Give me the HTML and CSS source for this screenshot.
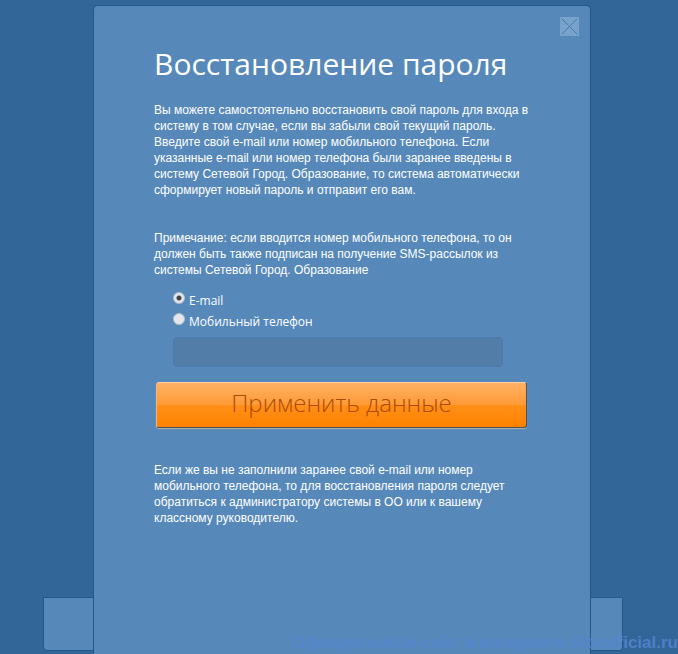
FILE: index.html
```html
<!doctype html>
<html lang="ru">
    <head>
        <meta charset="UTF-8">
        <title>Восстановление пароля</title>
        <link rel="stylesheet" href="styles.css">
    </head>
    <body>
        <div class="page">
            <div class="back-panel"></div>
            <div class="popup">
                <button class="close" type="button" aria-label="Закрыть">
                    <svg viewBox="0 0 20 20" width="20" height="20">
                        <path d="M2 2L18 18M18 2L2 18"/>
                    </svg>
                </button>
                <h1>Восстановление пароля</h1>
                <p class="intro">Вы можете самостоятельно восстановить свой пароль для входа в систему в том случае, если вы забыли свой текущий пароль. Введите свой e-mail или номер мобильного телефона. Если указанные e-mail или номер телефона были заранее введены в систему Сетевой Город. Образование, то система автоматически сформирует новый пароль и отправит его вам.</p>
                <p class="note">Примечание: если вводится номер мобильного телефона, то он должен быть также подписан на получение SMS-рассылок из системы Сетевой Город. Образование</p>
                <form class="recover">
                    <div class="fields">
                        <label class="choice"><input type="radio" name="way" value="email" checked> <span>E-mail</span></label>
                        <label class="choice"><input type="radio" name="way" value="phone"> <span>Мобильный телефон</span></label>
                        <input class="contact" type="text" name="contact" aria-label="E-mail или мобильный телефон">
                    </div>
                    <button class="submit" type="submit">Применить данные</button>
                </form>
                <p class="help">Если же вы не заполнили заранее свой e-mail или номер мобильного телефона, то для восстановления пароля следует обратиться к администратору системы в ОО или к вашему классному руководителю.</p>
            </div>
        </div>
        <div class="watermark">Официальные сайт в интернете Siteofficial.ru</div>
    </body>
</html>
```
FILE: styles.css
```css
*{
    box-sizing: border-box;
    margin: 0;
    padding: 0;
}
body{
    background-color: #336698;
    color: #fff;
    font: 12px/16px "Liberation Sans", Arial, sans-serif;
    overflow: hidden;
}
.page{
    display: grid;                     /* окно лежит поверх нижней панели */
    min-height: 100vh;
}
.back-panel,
.popup{
    grid-area: 1 / 1;
    justify-self: center;
    background-color: #5689ba;
    border: 1px solid #25578a;
}
.back-panel{
    align-self: end;
    width: calc(100% - 98px);
    max-width: 580px;
    height: 54px;
    margin: 0 12px 3px 0;
    border-radius: 0 0 4px 4px;
}
.popup{
    position: relative;
    width: 498px;
    max-width: 100%;
    margin: 5px 0 0 6px;
    padding: 40px 60px;
    border-bottom: 0;
    border-radius: 5px 5px 0 0;
}
.close{
    position: absolute;
    top: 11px;
    right: 11px;
    width: 19px;
    height: 19px;
    border: 0;
    background-color: #77a3ca;
    cursor: pointer;
}
.close svg{
    display: block;
    width: 100%;
    height: 100%;
    fill: none;
    stroke: #4778a8;
    stroke-width: 1;
}
h1{
    font: 30px/36px "Open Sans", sans-serif;
    white-space: nowrap;
}
.intro{
    margin-top: 20px;
}
.note{
    margin-top: 32px;
}
.fields{
    display: flex;
    flex-direction: column;
    padding: 12px 27px 0 19px;
}
.choice{
    display: flex;
    gap: 4px;
    height: 21px;
    font: 12px/21px "Open Sans", sans-serif;
}
.choice input{
    appearance: none;
    width: 12px;
    height: 12px;
    margin-top: 2px;
    border: 1px solid #b5c0cc;
    border-radius: 50%;
    background-color: #e4e6eb;
}
.choice input:checked{
    background: radial-gradient(circle, #444 0 2px, #e4e6eb 3px);
}
.contact{
    width: 100%;
    height: 30px;
    margin-top: 5px;
    padding: 0 8px;
    border: 1px solid #4c78ab;
    border-radius: 4px;
    background-color: #527da9;
    color: #fff;
    font: inherit;
}
.submit{
    display: block;
    width: calc(100% - 5px);
    height: 46px;
    margin: 15px 0 0 2px;
    padding-bottom: 4px;
    border: 1px solid;
    border-color: #ffd0a0 #4d5058 #4d5058 #e0bb94;
    border-radius: 3px;
    background: linear-gradient(#ffb065, #ff9b37 49%, #ff8f18 51%, #ff8200);
    box-shadow: 0 1px 1px #b5b4ac;
    color: #ad4a00;
    font: 300 24px/40px "Open Sans", sans-serif;
    cursor: pointer;
}
.help{
    margin-top: 34px;
}
.watermark{                            /* подпись поверх страницы */
    position: absolute;
    right: 0;
    bottom: 0;
    color: #5585d0;
    font: bold 17px/22px "Liberation Sans", Arial, sans-serif;
    white-space: nowrap;
    opacity: .8;
}
```
